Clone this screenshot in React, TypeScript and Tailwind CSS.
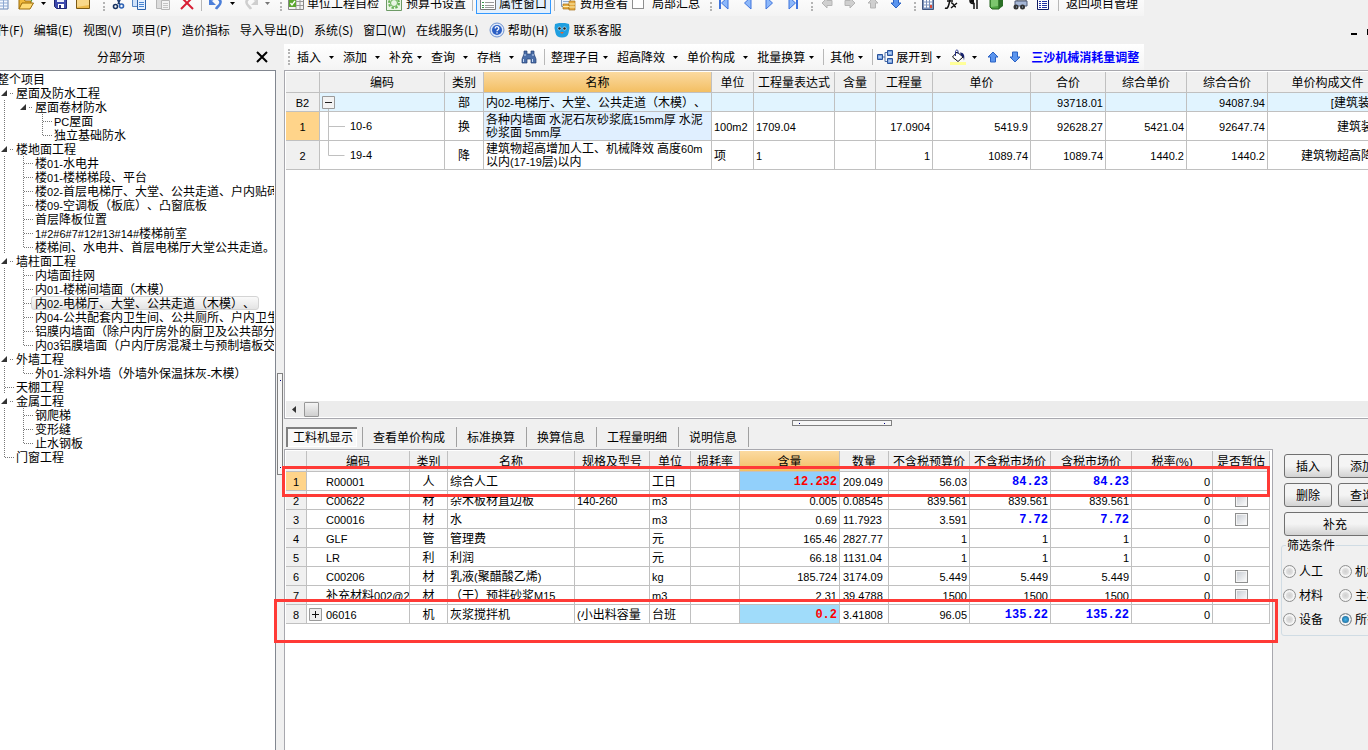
import { useState } from "react";
import type { ReactNode } from "react";
import clsx from "clsx";

interface TreeNode {
  label: string;
  depth: number;
  open?: boolean;
  last?: boolean;
}

const treeNodes: TreeNode[] = [
  { label: "屋面及防水工程", depth: 1, open: true },
  { label: "屋面卷材防水", depth: 2, open: true, last: true },
  { label: "PC屋面", depth: 3 },
  { label: "独立基础防水", depth: 3, last: true },
  { label: "楼地面工程", depth: 1, open: true },
  { label: "楼01-水电井", depth: 2 },
  { label: "楼01-楼梯梯段、平台", depth: 2 },
  { label: "楼02-首层电梯厅、大堂、公共走道、户内贴砖", depth: 2 },
  { label: "楼09-空调板（板底）、凸窗底板", depth: 2 },
  { label: "首层降板位置", depth: 2 },
  { label: "1#2#6#7#12#13#14#楼梯前室", depth: 2 },
  { label: "楼梯间、水电井、首层电梯厅大堂公共走道。", depth: 2, last: true },
  { label: "墙柱面工程", depth: 1, open: true },
  { label: "内墙面挂网", depth: 2 },
  { label: "内01-楼梯间墙面（木模）", depth: 2 },
  { label: "内02-电梯厅、大堂、公共走道（木模）、", depth: 2 },
  { label: "内04-公共配套内卫生间、公共厕所、户内卫生间", depth: 2 },
  { label: "铝膜内墙面（除户内厅房外的厨卫及公共部分", depth: 2 },
  { label: "内03铝膜墙面（户内厅房混凝土与预制墙板交", depth: 2, last: true },
  { label: "外墙工程", depth: 1, open: true },
  { label: "外01-涂料外墙（外墙外保温抹灰-木模）", depth: 2, last: true },
  { label: "天棚工程", depth: 1 },
  { label: "金属工程", depth: 1, open: true },
  { label: "钢爬梯", depth: 2 },
  { label: "变形缝", depth: 2 },
  { label: "止水钢板", depth: 2, last: true },
  { label: "门窗工程", depth: 1, last: true },
];

const menus = [
  "件(F)",
  "编辑(E)",
  "视图(V)",
  "项目(P)",
  "造价指标",
  "导入导出(D)",
  "系统(S)",
  "窗口(W)",
  "在线服务(L)",
];

const topColumns = [
  { title: "", width: "w-[34px]" },
  { title: "编码", width: "w-[125px]" },
  { title: "类别", width: "w-[39px]" },
  { title: "名称", width: "w-[228px]", active: true },
  { title: "单位", width: "w-[42px]" },
  { title: "工程量表达式", width: "w-[81px]" },
  { title: "含量", width: "w-[41px]" },
  { title: "工程量", width: "w-[57px]" },
  { title: "单价", width: "w-[98px]" },
  { title: "合价", width: "w-[75px]" },
  { title: "综合单价", width: "w-[81px]" },
  { title: "综合合价", width: "w-[81px]" },
  { title: "单价构成文件", width: "w-[120px]" },
];

const bottomColumns = [
  { title: "", width: "w-[21px]" },
  { title: "编码", width: "w-[103px]" },
  { title: "类别", width: "w-[38px]" },
  { title: "名称", width: "w-[127px]" },
  { title: "规格及型号", width: "w-[75px]" },
  { title: "单位", width: "w-[41px]" },
  { title: "损耗率", width: "w-[49px]" },
  { title: "含量", width: "w-[100px]", active: true },
  { title: "数量", width: "w-[49px]" },
  { title: "不含税预算价", width: "w-[81px]" },
  { title: "不含税市场价", width: "w-[81px]" },
  { title: "含税市场价", width: "w-[81px]" },
  { title: "税率(%)", width: "w-[81px]" },
  { title: "是否暂估", width: "w-[57px]" },
];

const materials = [
  { code: "R00001", kind: "人", name: "综合人工", spec: "", unit: "工日", content: "12.232", qty: "209.049", budget: "56.03", net: "84.23", gross: "84.23", changed: true },
  { code: "C00622", kind: "材", name: "杂木板材直边板", spec: "140-260", unit: "m3", content: "0.005", qty: "0.08545", budget: "839.561", net: "839.561", gross: "839.561", check: true },
  { code: "C00016", kind: "材", name: "水", spec: "", unit: "m3", content: "0.69", qty: "11.7923", budget: "3.591", net: "7.72", gross: "7.72", blue: true, check: true },
  { code: "GLF", kind: "管", name: "管理费", spec: "", unit: "元", content: "165.46", qty: "2827.77", budget: "1", net: "1", gross: "1" },
  { code: "LR", kind: "利", name: "利润", spec: "", unit: "元", content: "66.18", qty: "1131.04", budget: "1", net: "1", gross: "1" },
  { code: "C00206", kind: "材", name: "乳液(聚醋酸乙烯)", spec: "", unit: "kg", content: "185.724", qty: "3174.09", budget: "5.449", net: "5.449", gross: "5.449", check: true },
  { code: "补充材料002@2", kind: "材", name: "（干）预拌砂浆M15", spec: "", unit: "m3", content: "2.31", qty: "39.4788", budget: "1500", net: "1500", gross: "1500", check: true },
  { code: "06016", kind: "机", name: "灰浆搅拌机", spec: "(小出料容量", unit: "台班", content: "0.2", qty: "3.41808", budget: "96.05", net: "135.22", gross: "135.22", changed: true, expandable: true },
];

const tabs = ["工料机显示", "查看单价构成", "标准换算", "换算信息", "工程量明细", "说明信息"];

// latin runs are set smaller so that they take half the width of a han character
const Song = ({ children }: { children: string }) => (
  <>
    {children.split(/([\x20-\x7e]+)/).map((part, i) =>
      i % 2 ? (
        <span
          key={i}
          className="whitespace-pre font-['Liberation_Sans',sans-serif] text-[11px] leading-none"
        >
          {part}
        </span>
      ) : (
        part
      )
    )}
  </>
);

const Icon = ({ children, className }: { children: ReactNode; className?: string }) => (
  <svg viewBox="0 0 16 16" className={clsx("h-4 w-4 shrink-0", className)} aria-hidden="true">
    {children}
  </svg>
);

const Caret = ({ className, fill = "#000" }: { className?: string; fill?: string }) => (
  <svg viewBox="0 0 5 3" className={clsx("h-[3px] w-[5px] shrink-0", className)} aria-hidden="true">
    <path d="M0 0h5L2.500 3z" fill={fill} />
  </svg>
);

const Handle = ({ className }: { className?: string }) => (
  <span
    className={clsx("h-4 w-0.5 shrink-0 border-l-2 border-dotted border-[#b4b4b4]", className)}
  />
);

const Separator = ({ className }: { className?: string }) => (
  <span className={clsx("h-4 w-px shrink-0 bg-[#b8b8b8]", className)} />
);

const Tool = ({
  label,
  className,
  children,
}: {
  label: string;
  className?: string;
  children: ReactNode;
}) => (
  <button type="button" aria-label={label} className={clsx("shrink-0", className)}>
    {children}
  </button>
);

const DropTool = ({ text, wide = false }: { text: string; wide?: boolean }) => (
  <button
    type="button"
    className={clsx("mr-[9px] flex shrink-0 items-center", wide ? "gap-2" : "gap-1")}
  >
    {text}
    <Caret />
  </button>
);

const NavIcon = ({ bar, flip = false }: { bar?: boolean; flip?: boolean }) => (
  <Icon className={flip ? "-scale-x-100" : undefined}>
    {bar && <path d="M3 2h2v12H3z" fill="#3f74dd" />}
    <path d="M12 2v12L5.500 8z" fill="#8db8fa" stroke="#3f74dd" strokeWidth="1" />
  </Icon>
);

const ArrowIcon = ({ className, gray = false }: { className?: string; gray?: boolean }) => (
  <Icon className={className}>
    <path
      d="M8 3l5 5h-2.500v5h-5v-5h-2.500z"
      fill={gray ? "#cfcfcf" : "#5b95ee"}
      stroke={gray ? "#b5b5b5" : "#2b62c4"}
    />
  </Icon>
);

const Binoculars = () => (
  <Icon>
    <path d="M3 2h3v3h4V2h3v3l2 5v4h-5v-4H6v4H1v-4l2-5z" fill="#4b6ea8" stroke="#243f73" strokeWidth=".7" />
    <path d="M3 6h2M11 6h2M2.500 10v3M11.500 10v3" stroke="#c5d8f5" />
  </Icon>
);

const MainToolbar = () => (
  <div className="flex h-4 shrink-0 flex-col justify-end overflow-hidden">
    <div className="flex h-[26px] w-[1144px] shrink-0 items-center bg-linear-to-b from-white to-[#f4f4f4] whitespace-nowrap">
      <Tool label="新建" className="-ml-1.5">
        <Icon>
          <path d="M1 1h13v13H1z" fill="#f5f9ff" stroke="#6a87b5" />
          <path d="M1 5h13M1 8h13M1 11h13M5 2v12M9.500 2v12" stroke="#8ea9d2" />
          <path d="M11 1h4v4h-4z" fill="#f4c542" />
        </Icon>
      </Tool>
      <Tool label="打开" className="ml-2">
        <Icon>
          <path d="M1 14V4h5l1 2h6v3" fill="#f0b93a" stroke="#9a6a08" />
          <path d="M1 14l3-6h11.500l-3.500 6z" fill="#ffdc75" stroke="#9a6a08" />
          <path d="M9 2h4v5l2-3L13 1" fill="#3e9a36" />
        </Icon>
      </Tool>
      <Caret className="ml-[7px]" />
      <Tool label="保存" className="ml-[7px]">
        <Icon>
          <path d="M1.500 1.500h12v12h-10l-2-2z" fill="#3c49ad" stroke="#1d2575" />
          <path d="M4 2h7v5H4z" fill="#e9edfb" />
          <path d="M5 9h6v4H5z" fill="#fff" />
          <path d="M6 10h2v3H6z" fill="#252e80" />
        </Icon>
      </Tool>
      <Tool label="工程" className="ml-1.5">
        <Icon>
          <path d="M1.500 2.500h13v11h-13z" fill="#eebb4c" stroke="#7d5a14" />
          <path d="M2 3h12v7L2 12z" fill="#f9d88a" />
        </Icon>
      </Tool>
      <Handle className="ml-3" />
      <Tool label="剪切" className="ml-1.5">
        <Icon>
          <path d="M5 1l4 9M11 1L7 9" stroke="#1e3c70" strokeWidth="1.500" />
          <circle cx="4.500" cy="11.500" r="2" fill="none" stroke="#15305f" strokeWidth="1.600" />
          <circle cx="10.500" cy="11" r="2" fill="none" stroke="#2d62b5" strokeWidth="1.600" />
        </Icon>
      </Tool>
      <Tool label="复制" className="ml-1">
        <Icon>
          <path d="M1.500 1.500h8v10h-8z" fill="#cfe2fa" stroke="#5585c3" />
          <path d="M6.500 4.500h8v10h-8z" fill="#e6f1ff" stroke="#2e64ac" />
          <path d="M8 7.500h5M8 9.500h5M8 11.500h5" stroke="#4a86d2" />
        </Icon>
      </Tool>
      <Tool label="粘贴" className="ml-2">
        <Icon>
          <path d="M1.500 2.500h9v11h-9z" fill="#dcdcdc" stroke="#b6b6b6" />
          <path d="M6.500 5.500h8v9h-8z" fill="#f4f4f4" stroke="#b6b6b6" />
          <path d="M8 8.500h5M8 10.500h5M8 12.500h5" stroke="#c5c5c5" />
        </Icon>
      </Tool>
      <Tool label="删除" className="ml-2">
        <Icon>
          <path d="M2 2l12 12M14 2L2 14" stroke="#d81e35" strokeWidth="2" />
        </Icon>
      </Tool>
      <Separator className="ml-1.5" />
      <Tool label="撤销" className="ml-1.5">
        <Icon>
          <path d="M3 5c6-4 11 0 9 4-1 2-3 3-4 5" fill="none" stroke="#4c7fd9" strokeWidth="2.500" />
          <path d="M1 3v7h7z" fill="#4c7fd9" />
        </Icon>
      </Tool>
      <Caret className="ml-1.5" />
      <Tool label="重做" className="ml-2">
        <Icon className="-scale-x-100">
          <path d="M3 5c6-4 11 0 9 4-1 2-3 3-4 5" fill="none" stroke="#cfcfcf" strokeWidth="2.500" />
          <path d="M1 3v7h7z" fill="#cfcfcf" />
        </Icon>
      </Tool>
      <Caret className="ml-1.5" fill="#777" />
      <Handle className="ml-2.5" />
      <button type="button" className="ml-1.5 flex shrink-0 items-center gap-[3px]">
        <Icon>
          <path d="M.5 2.500h15v12H.5z" fill="#f3f3f3" stroke="#888" />
          <path d="M1 6.500h14M1 10.500h14M8 3v11M12 3v11" stroke="#999" />
          <path d="M1 5h7v7H1z" fill="#5aa62f" />
          <path d="M2.500 8l1.500 2 3-4" fill="none" stroke="#fff" strokeWidth="1.300" />
        </Icon>
        单位工程自检
      </button>
      <button type="button" className="ml-[7px] flex shrink-0 items-center gap-1">
        <Icon>
          <path d="M.5.5h15v15H.5z" fill="#e9f5e4" stroke="#6d9a66" />
          <circle cx="8" cy="8" r="5" fill="none" stroke="#67b155" strokeWidth="2" strokeDasharray="2.400 1.500" />
          <circle cx="8" cy="8" r="3.500" fill="none" stroke="#67b155" />
        </Icon>
        预算书设置
      </button>
      <Separator className="ml-1.5" />
      <button
        type="button"
        aria-pressed="true"
        className="ml-[3px] flex h-[22px] shrink-0 items-center gap-[3px] border border-[#3399ff] bg-[#e4f0fc] px-[3px]"
      >
        <Icon>
          <path d="M.5 1.500h15v13H.5z" fill="#fdfdfd" stroke="#777" />
          <path d="M2 4.500h2M2 7.500h2M2 10.500h2M2 12.500h2" stroke="#38974a" />
          <path d="M5 4.500h9M5 7.500h9M5 10.500h9M5 12.500h9" stroke="#999" />
        </Icon>
        属性窗口
      </button>
      <Separator className="ml-[3px]" />
      <button type="button" className="ml-[5px] flex shrink-0 items-center gap-1">
        <Icon>
          <path d="M1.500.5h9v11h-9z" fill="#eef4fc" stroke="#7b99c2" />
          <path d="M3 3.500h6M3 6.500h6" stroke="#8ca9d0" />
          <path d="M3 9h6v5H3zM9 6h6v9H9z" fill="#e5ab43" stroke="#ab741a" strokeWidth=".7" />
          <path d="M9 9h6M9 12h6M3 11.500h6" stroke="#fff0b0" />
        </Icon>
        费用查看
      </button>
      <label className="ml-1 flex shrink-0 items-center gap-2">
        <input type="checkbox" className="h-3 w-3 appearance-none border border-[#8e8f8f] bg-white" />
        局部汇总
      </label>
      <Handle className="ml-2.5" />
      <div className="ml-1 flex shrink-0 gap-[7px]">
        <Tool label="第一个"><NavIcon bar /></Tool>
        <Tool label="上一个"><NavIcon /></Tool>
        <Tool label="下一个"><NavIcon flip /></Tool>
        <Tool label="最后一个"><NavIcon bar flip /></Tool>
      </div>
      <Handle className="ml-2.5" />
      <div className="ml-1.5 flex shrink-0 gap-[7px]">
        <Tool label="升级"><ArrowIcon gray className="-rotate-90" /></Tool>
        <Tool label="降级"><ArrowIcon gray className="rotate-90" /></Tool>
        <Tool label="上移"><ArrowIcon gray /></Tool>
        <Tool label="下移"><ArrowIcon className="rotate-180" /></Tool>
      </div>
      <Handle className="ml-2.5" />
      <div className="ml-1 flex shrink-0 gap-[7px]">
        <Tool label="计算器">
          <Icon>
            <path d="M2.500.5h11v14h-11z" fill="#7c93ba" stroke="#40557d" />
            <path d="M4 5.500h8M4 8.500h8M4 11.500h8" stroke="#fff" strokeWidth="2" strokeDasharray="2 1" />
            <path d="M10 10h2v3h-2z" fill="#d84d3c" />
          </Icon>
        </Tool>
        <Tool label="函数">
          <Icon>
            <path d="M10 2c-3-1-3 3-4 7s-2 5-4 4M4 6h6M8 8c3-1 2 4 5 4M14 8l-6 5" fill="none" stroke="#111" strokeWidth="1.500" />
          </Icon>
        </Tool>
        <Tool label="特殊符号">
          <Icon>
            <path d="M12 2.500H7a3 3 0 000 6h1V14M11 2.500V14" fill="none" stroke="#111" strokeWidth="1.500" />
            <path d="M8 3H7a2.500 2.500 0 000 5h1z" fill="#111" />
          </Icon>
        </Tool>
        <Tool label="图集">
          <Icon>
            <path d="M1 4l9-1v11H3l-2-2z" fill="#4fa443" stroke="#27651f" />
            <path d="M10 3l4-2v10l-4 3z" fill="#2a6f25" />
            <path d="M2 5l7-1v7L2 12z" fill="#7cc66e" />
          </Icon>
        </Tool>
        <Tool label="打印预览">
          <Icon>
            <path d="M5 1h9v5H5z" fill="#f5f5f5" stroke="#666" />
            <path d="M3 6h12v5H3z" fill="#a6b7d6" stroke="#4e5b77" />
            <circle cx="4" cy="12" r="2.500" fill="#333" />
            <circle cx="10.500" cy="12" r="2.500" fill="#333" />
            <path d="M4 12h1M10 12h1" stroke="#9bd" />
          </Icon>
        </Tool>
        <Tool label="列表">
          <Icon>
            <path d="M2.500 1.500h11v13h-11z" fill="#fff" stroke="#111c63" />
            <path d="M4 4.500h2M4 6.500h2M4 8.500h2M4 10.500h2M4 12.500h2M7 4.500h5M7 6.500h5M7 8.500h5M7 10.500h5M7 12.500h5" stroke="#2033a5" />
          </Icon>
        </Tool>
      </div>
      <Separator className="ml-[7px]" />
      <button type="button" className="ml-[7px] shrink-0">返回项目管理</button>
    </div>
  </div>
);

const MenuBar = () => (
  <nav className="-ml-[3px] flex h-7 shrink-0 items-center gap-2.5 whitespace-nowrap">
    {menus.map((menu) => (
      <button key={menu} type="button" className="shrink-0">
        {menu}
      </button>
    ))}
    <button type="button" className="flex shrink-0 items-center gap-[3px]">
      <Icon>
        <circle cx="8" cy="8" r="7" fill="#dfe9f9" stroke="#6d92d0" />
        <circle cx="8" cy="8" r="5" fill="#2b5fc4" />
        <path d="M6.200 6.500c0-2.500 3.800-2.300 3.600 0C9.700 7.800 8 7.800 8 9.300M8 10.300v1.300" fill="none" stroke="#fff" strokeWidth="1.300" />
      </Icon>
      帮助(H)
    </button>
    <button type="button" className="-ml-1 flex shrink-0 items-center gap-[3px]">
      <Icon>
        <path d="M1 2l4-1h6l4 1 .5 4-1 5c-.5 3-3 4.500-6.500 4.500S2 14 1.500 11l-1-5z" fill="#1f9fe0" />
        <circle cx="5.500" cy="6.500" r="2" fill="#b9dcf0" />
        <circle cx="10.500" cy="6.500" r="2" fill="#b9dcf0" />
        <circle cx="5.500" cy="6.500" r="1.300" fill="#222" />
        <circle cx="10.500" cy="6.500" r="1.300" fill="#222" />
        <path d="M6 10h4l-2 2z" fill="#e9652e" />
      </Icon>
      联系客服
    </button>
    <div className="ml-auto flex shrink-0 gap-2.5 pt-2">
      <button type="button" aria-label="最小化" className="h-0.5 w-1.5 bg-black" />
      <span className="-mt-1 h-1.5 w-px bg-black" />
    </div>
  </nav>
);

const Guide = ({ node }: { node: TreeNode }) => (
  <svg viewBox="0 0 19 14" className="h-3.5 w-[19px] shrink-0" aria-hidden="true">
    {node.open ? (
      <>
        <path d="M10 4v6H4z" fill="#333" />
        <path d="M13 7.500h4" stroke="#777" strokeDasharray="1 1" />
      </>
    ) : (
      <>
        <path d={node.last ? "M7.500 0v8" : "M7.500 0v14"} stroke="#777" strokeDasharray="1 1" />
        <path d="M8 7.500h9" stroke="#777" strokeDasharray="1 1" />
      </>
    )}
  </svg>
);

const ProjectTree = () => {
  const [selected, setSelected] = useState(15);

  return (
    <ul className="-ml-[3px] overflow-hidden pt-px leading-[14px] whitespace-nowrap">
      <li className="h-3.5">整个项目</li>
      {treeNodes.map((node, i) => (
        <li key={node.label} className="flex h-3.5">
          {node.depth > 1 && (
            <svg viewBox="0 0 19 14" className="h-3.5 w-[19px] shrink-0" aria-hidden="true">
              <path d="M7.500 0v14" stroke="#777" strokeDasharray="1 1" />
            </svg>
          )}
          {node.depth > 2 && <span className="w-[19px] shrink-0" />}
          <Guide node={node} />
          <button
            type="button"
            onClick={() => setSelected(i)}
            className={clsx(
              "-ml-1 h-3.5 shrink-0 rounded-[3px] border px-[3px] leading-[12px]",
              selected === i
                ? "border-[#d4d4d4] bg-linear-to-b from-[#fafafa] to-[#e4e4e4]"
                : "border-transparent"
            )}
          >
            <Song>{node.label}</Song>
          </button>
        </li>
      ))}
    </ul>
  );
};

const QuotaToolbar = () => (
  <div className="h-[26px] shrink-0 overflow-hidden">
    <div className="flex h-[26px] w-[860px] items-center bg-linear-to-b from-white to-[#f4f4f4] pl-1 whitespace-nowrap">
      <Handle className="mr-[7px]" />
      <DropTool text="插入" wide />
      <DropTool text="添加" wide />
      <DropTool text="补充" />
      <DropTool text="查询" wide />
      <DropTool text="存档" wide />
      <Tool label="查找" className="-ml-0.5"><Binoculars /></Tool>
      <Separator className="mr-1.5 ml-[7px]" />
      <DropTool text="整理子目" />
      <DropTool text="超高降效" wide />
      <DropTool text="单价构成" wide />
      <DropTool text="批量换算" />
      <Separator className="mr-1.5" />
      <DropTool text="其他" />
      <Separator className="mr-1" />
      <Icon className="mr-[3px]">
        <path d="M4 8h4M8 3.500v9M8 3.500h3M8 12.500h3" fill="none" stroke="#4c6ea8" />
        <path d="M.5 5.500h5v5h-5zM10.500 1.500h5v5h-5zM10.500 9.500h5v5h-5z" fill="#6f9ce0" stroke="#2a5299" />
        <path d="M1.500 8h3M11.500 4h3M11.500 12h3" stroke="#fff" />
      </Icon>
      <DropTool text="展开到" />
      <Tool label="填充颜色">
        <Icon>
          <path d="M0 13h16v3H0z" fill="#ffff99" />
          <path d="M7 3l6 5-5 4.500L2.500 8z" fill="#fff" stroke="#111" />
          <path d="M5.500 7V2.500C6 .5 8 .5 8 2.500V5" fill="none" stroke="#24308c" />
          <path d="M10 3.500c4 0 5 3 4 8-.5-3-1-4-3-5z" fill="#16216e" />
        </Icon>
      </Tool>
      <Caret className="ml-1.5" />
      <Tool label="上移一行" className="ml-2"><ArrowIcon /></Tool>
      <Tool label="下移一行" className="ml-1.5"><ArrowIcon className="rotate-180" /></Tool>
      <a href="#adjust" className="ml-2 font-bold text-[#0000ff]">三沙机械消耗量调整</a>
    </div>
  </div>
);

const GridHead = ({
  columns,
}: {
  columns: { title: string; width: string; active?: boolean }[];
}) => (
  <thead>
    <tr>
      {columns.map((column, i) => (
        <th
          key={i}
          className={clsx(
            "h-[21px] overflow-hidden border-r border-b border-[#c0c0c0] p-0 font-normal",
            column.width,
            column.active ? "bg-linear-to-b from-[#fbdaa0] to-[#f3bf62]" : "bg-[#f0f0f0]"
          )}
        >
          <Song>{column.title}</Song>
        </th>
      ))}
    </tr>
  </thead>
);

const Cell = ({ children, className }: { children?: ReactNode; className?: string }) => (
  <td className={clsx("overflow-hidden border-r border-b border-[#c0c0c0] px-0.5 py-0", className)}>
    {typeof children === "string" ? <Song>{children}</Song> : children}
  </td>
);

const QuotaGrid = () => (
  <table className="w-[1102px] table-fixed border-separate border-spacing-0 leading-[12px] whitespace-nowrap">
    <GridHead columns={topColumns} />
    <tbody>
      <tr className="h-[19px] bg-[#e1f4ff]">
        <Cell className="bg-[#f0f0f0] text-center">B2</Cell>
        <td className="border-r border-b border-[#c0c0c0] p-0">
          <button type="button" aria-label="折叠" className="block">
            <svg viewBox="0 0 30 18" className="h-[18px] w-[30px]">
              <path d="M2.500 3.500h12v12h-12z" fill="#f3f3f3" stroke="#9a9a9a" />
              <path d="M5 9.500h7" stroke="#222" />
              <path d="M8.500 16v2" stroke="#c0c0c0" />
            </svg>
          </button>
        </td>
        <Cell className="text-center">部</Cell>
        <Cell>内02-电梯厅、大堂、公共走道（木模）、</Cell>
        <Cell />
        <Cell />
        <Cell />
        <Cell />
        <Cell />
        <Cell className="text-right">93718.01</Cell>
        <Cell />
        <Cell className="text-right">94087.94</Cell>
        <Cell className="text-right">[建筑装饰]</Cell>
      </tr>
      <tr className="h-[29px]">
        <Cell className="bg-[#ffd48a] text-center">1</Cell>
        <td className="border-r border-b border-[#c0c0c0] p-0">
          <div className="flex items-center">
            <svg viewBox="0 0 30 28" className="h-7 w-[30px]" aria-hidden="true">
              <path d="M8.500 0v28M9 14.500h16" stroke="#c0c0c0" />
            </svg>
            <Song>10-6</Song>
          </div>
        </td>
        <Cell className="text-center">换</Cell>
        <Cell className="bg-[#e0efff]">
          <Song>各种内墙面 水泥石灰砂浆底15mm厚 水泥</Song>
          <br />
          <Song>砂浆面 5mm厚</Song>
        </Cell>
        <Cell>100m2</Cell>
        <Cell>1709.04</Cell>
        <Cell />
        <Cell className="text-right">17.0904</Cell>
        <Cell className="text-right">5419.9</Cell>
        <Cell className="text-right">92628.27</Cell>
        <Cell className="text-right">5421.04</Cell>
        <Cell className="text-right">92647.74</Cell>
        <Cell className="text-right">建筑装饰</Cell>
      </tr>
      <tr className="h-[29px]">
        <Cell className="bg-[#f0f0f0] text-center">2</Cell>
        <td className="border-r border-b border-[#c0c0c0] p-0">
          <div className="flex items-center">
            <svg viewBox="0 0 30 28" className="h-7 w-[30px]" aria-hidden="true">
              <path d="M8.500 0v14.500h16" fill="none" stroke="#c0c0c0" />
            </svg>
            <Song>19-4</Song>
          </div>
        </td>
        <Cell className="text-center">降</Cell>
        <Cell>
          <Song>建筑物超高增加人工、机械降效 高度60m</Song>
          <br />
          <Song>以内(17-19层)以内</Song>
        </Cell>
        <Cell>项</Cell>
        <Cell>1</Cell>
        <Cell />
        <Cell className="text-right">1</Cell>
        <Cell className="text-right">1089.74</Cell>
        <Cell className="text-right">1089.74</Cell>
        <Cell className="text-right">1440.2</Cell>
        <Cell className="text-right">1440.2</Cell>
        <Cell className="text-right">建筑物超高降效</Cell>
      </tr>
    </tbody>
  </table>
);

const Strong = ({ children, className }: { children: string; className: string }) => (
  <span className={clsx("font-['Liberation_Mono',monospace] text-[12px] font-bold", className)}>
    {children}
  </span>
);

const MaterialGrid = () => (
  <table className="w-[984px] table-fixed border-separate border-spacing-0 leading-[12px] whitespace-nowrap">
    <GridHead columns={bottomColumns} />
    <tbody>
      {materials.map((row, i) => {
        const blue = row.changed || row.blue;

        return (
          <tr key={row.code} className="h-[19px]">
            <Cell className={clsx("text-center", i === 0 ? "bg-[#ffd48a]" : "bg-[#f0f0f0]")}>
              {String(i + 1)}
            </Cell>
            <Cell>
              <div className="flex items-center">
                <span className="flex w-[17px] shrink-0">
                  {row.expandable && (
                    <button type="button" aria-label="展开">
                      <svg viewBox="0 0 13 13" className="block h-[13px] w-[13px]">
                        <path d="M.5.5h12v12H.5z" fill="#ededed" stroke="#9a9a9a" />
                        <path d="M3 6.500h7M6.500 3v7" stroke="#111" />
                      </svg>
                    </button>
                  )}
                </span>
                <span>
                  <Song>{row.code}</Song>
                </span>
              </div>
            </Cell>
            <Cell className="text-center">{row.kind}</Cell>
            <Cell>{row.name}</Cell>
            <Cell>{row.spec}</Cell>
            <Cell>{row.unit}</Cell>
            <Cell />
            <Cell
              className={clsx(
                "text-right",
                row.changed && (i === 0 ? "bg-[#92d0fb]" : "bg-[#a0dcfa]")
              )}
            >
              {row.changed ? <Strong className="text-[#ff0000]">{row.content}</Strong> : row.content}
            </Cell>
            <Cell>
              <span className="pl-px">
                <Song>{row.qty}</Song>
              </span>
            </Cell>
            <Cell className="text-right">{row.budget}</Cell>
            <Cell className="text-right">
              {blue ? <Strong className="text-[#0000ff]">{row.net}</Strong> : row.net}
            </Cell>
            <Cell className="text-right">
              {blue ? <Strong className="text-[#0000ff]">{row.gross}</Strong> : row.gross}
            </Cell>
            <Cell className="text-right">0</Cell>
            <Cell>
              {row.check && (
                <input
                  type="checkbox"
                  aria-label={`${row.name}是否暂估`}
                  className="mx-auto block h-[13px] w-[13px] appearance-none border border-[#8e8f8f] bg-linear-to-br from-[#c4c9d0] to-white shadow-[inset_0_0_0_1px_#f4f4f4]"
                />
              )}
            </Cell>
          </tr>
        );
      })}
    </tbody>
  </table>
);

const PushButton = ({ children, className }: { children: string; className: string }) => (
  <button
    type="button"
    className={clsx(
      "h-6 shrink-0 rounded-[3px] border border-[#707070] bg-linear-to-b from-[#f4f4f4] from-50% to-[#d2d2d2]",
      className
    )}
  >
    {children}
  </button>
);

const filters = [
  ["人工", "机械"],
  ["材料", "主材"],
  ["设备", "所有"],
];

const SidePanel = () => (
  <div className="flex w-[95px] shrink-0 flex-col gap-[5px] overflow-hidden pt-[5px] pl-[11px] whitespace-nowrap">
    <div className="flex gap-1.5">
      <PushButton className="w-12">插入</PushButton>
      <PushButton className="w-12">添加</PushButton>
    </div>
    <div className="flex gap-1.5">
      <PushButton className="w-12">删除</PushButton>
      <PushButton className="w-12">查询</PushButton>
    </div>
    <PushButton className="w-[102px]">补充</PushButton>
    <fieldset className="-mt-1 -ml-[3px] w-[120px] rounded-[3px] border border-[#d0dce4] pb-2">
      <legend className="ml-1 px-px leading-4">筛选条件</legend>
      <div className="flex flex-col gap-2 pt-2.5">
        {filters.map((pair) => (
          <div key={pair[0]} className="flex">
            {pair.map((name) => (
              <label key={name} className="flex w-14 items-center gap-[3px] pl-px leading-4">
                <input
                  type="radio"
                  name="filter"
                  defaultChecked={name === "所有"}
                  className="h-[13px] w-[13px] appearance-none rounded-full border border-[#8e8f8f] bg-radial from-[#d0d0d0] to-[#f6f6f6] shadow-[inset_0_0_0_2px_#f4f4f4] checked:from-[#41b5ec] checked:to-[#0b2f57]"
                />
                {name}
              </label>
            ))}
          </div>
        ))}
      </div>
    </fieldset>
  </div>
);

export default function App() {
  const [tab, setTab] = useState(tabs[0]);

  return (
    <div className="flex h-screen flex-col overflow-hidden bg-[#f0f0f0] font-['Noto_Sans_CJK_SC',sans-serif] text-xs text-black [text-spacing-trim:space-all]">
      <MainToolbar />
      <MenuBar />
      <div className="flex min-h-0 flex-1">
        <aside className="flex w-[276px] shrink-0 flex-col">
          <div className="flex h-[26px] shrink-0 items-center pr-2">
            <h2 className="flex-1 pr-3.5 text-center">分部分项</h2>
            <button type="button" aria-label="关闭">
              <svg viewBox="0 0 12 12" className="h-3 w-3">
                <path d="M1 1l10 10M11 1L1 11" stroke="#000" strokeWidth="2" />
              </svg>
            </button>
          </div>
          <div className="min-h-0 flex-1 overflow-hidden border-t border-r border-[#828790] bg-white pr-px">
            <ProjectTree />
          </div>
        </aside>
        <div className="w-2 shrink-0 px-px pt-[329px]">
          <div className="flex h-[102px] w-1.5 flex-col items-center justify-between border border-[#808080] bg-[#f6f6f6] py-1.5">
            <span className="h-px w-px bg-[#000080]" />
            <span className="h-px w-px bg-[#000080]" />
          </div>
        </div>
        <main className="flex min-w-0 flex-1 flex-col">
          <QuotaToolbar />
          <section className="flex min-h-0 flex-[346_1_0px] flex-col overflow-hidden border-y border-l border-[#a8a8ae] bg-white pt-px pl-px">
            <div className="min-h-0 flex-1 overflow-hidden">
              <QuotaGrid />
            </div>
            <div className="mb-px flex h-4 shrink-0 items-center gap-2 bg-[#ececec] pl-1.5">
              <svg viewBox="0 0 4 7" className="h-[7px] w-1" aria-hidden="true">
                <path d="M4 0v7L0 3.500z" fill="#333" />
              </svg>
              <span className="h-[15px] w-[15px] rounded-[1px] border border-[#979797] bg-linear-to-b from-[#f4f4f4] to-[#cfcfcf]" />
            </div>
          </section>
          <div className="flex h-[30px] shrink-0 flex-col">
            <div className="mt-px ml-[508px] flex h-1.5 w-[100px] shrink-0 items-center justify-between border border-[#808080] bg-[#f6f6f6] px-1.5">
              <span className="h-px w-px bg-[#000080]" />
              <span className="h-px w-px bg-[#000080]" />
            </div>
            <div role="tablist" className="flex h-[21px] items-center pt-px pl-0.5 whitespace-nowrap">
              {tabs.map((name, i) => (
                <button
                  key={name}
                  type="button"
                  role="tab"
                  aria-selected={tab === name}
                  onClick={() => setTab(name)}
                  className={clsx(
                    "h-5 shrink-0",
                    i === 0
                      ? "mr-[5px] pr-1 pl-[7px]"
                      : "border-r border-[#a0a0a0] pr-[11px] pl-2.5",
                    i === 1 && "border-l",
                    tab === name &&
                      "bg-[#f8f8f8] shadow-[inset_1px_1px_0_1px_#808080,inset_-1px_-1px_0_#ffffff]"
                  )}
                >
                  {name}
                </button>
              ))}
            </div>
          </div>
          <div className="relative flex min-h-0 flex-[301_1_0px]">
            <div className="min-w-0 flex-1 overflow-hidden border-x border-t border-[#a8a8ae] bg-white pt-px pl-px">
              <MaterialGrid />
            </div>
            <SidePanel />
            <div className="pointer-events-none absolute top-[17px] right-[98px] -left-0.5 h-[31px] border-3 border-[#ff3a36]" />
            <div className="pointer-events-none absolute top-[150px] right-[90px] -left-2.5 h-11 border-3 border-[#ff3a36]" />
          </div>
        </main>
      </div>
    </div>
  );
}
